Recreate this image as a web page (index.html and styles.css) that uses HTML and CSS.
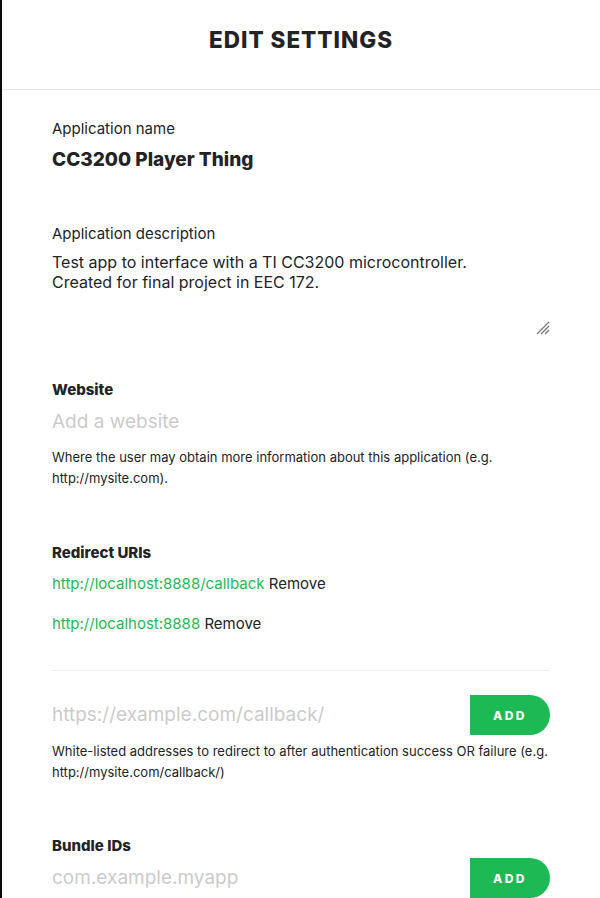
FILE: index.html
```html
<!DOCTYPE html>
<html>
<head>
<meta charset="utf-8">
<link rel="stylesheet" href="styles.css">
</head>
<body>
<div class="page">
  <header class="header"><h1 class="title">EDIT SETTINGS</h1></header>
  <main class="content">
    <section class="field field-name">
      <div class="label">Application name</div>
      <div class="app-name">CC3200 Player Thing</div>
    </section>
    <section class="field field-desc">
      <div class="label">Application description</div>
      <div class="textarea">
        <div class="desc-text">Test app to interface with a TI CC3200 microcontroller.<br>Created for final project in EEC 172.</div>
        <svg class="resize" width="14" height="14" viewBox="0 0 14 14"><g stroke="#777" stroke-width="1.3"><line x1="1" y1="13" x2="13" y2="1"/><line x1="5" y1="13" x2="13" y2="5"/><line x1="9" y1="13" x2="13" y2="9"/></g></svg>
      </div>
    </section>
    <section class="field field-web">
      <div class="label-bold">Website</div>
      <div class="placeholder">Add a website</div>
      <p class="help">Where the user may obtain more information about this application (e.g. http://mysite.com).</p>
    </section>
    <section class="field field-redirect">
      <div class="label-bold">Redirect URIs</div>
      <div class="uri"><span class="link">http://localhost:8888/callback</span> Remove</div>
      <div class="uri"><span class="link">http://localhost:8888</span> Remove</div>
      <div class="divider"></div>
      <div class="add-row">
        <div class="placeholder">https://example.com/callback/</div>
        <button class="add-btn">ADD</button>
      </div>
      <p class="help">White-listed addresses to redirect to after authentication success OR failure (e.g. http://mysite.com/callback/)</p>
    </section>
    <section class="field field-bundle">
      <div class="label-bold">Bundle IDs</div>
      <div class="add-row">
        <div class="placeholder">com.example.myapp</div>
        <button class="add-btn">ADD</button>
      </div>
    </section>
  </main>
</div>
</body>
</html>
```
FILE: styles.css
```css
html, body { margin: 0; padding: 0; background: #fff; }
body { font-family: Inter, "Liberation Sans", sans-serif; color: #222326; overflow: hidden; height: 898px; }
.page { border-left: 2px solid #0a0a0a; min-height: 898px; box-sizing: border-box; }
.header { height: 89px; border-bottom: 1px solid #e6e6e6; display: flex; align-items: center; justify-content: center; }
.title { margin: 0; font-size: 22.5px; font-weight: 800; letter-spacing: 1px; color: #222326; padding-bottom: 10px; }
.content { padding: 0 50px 0 50px; }
.field-name { padding-top: 29px; }
.label { font-size: 15px; line-height: 20px; }
.app-name { font-size: 19px; font-weight: 800; margin-top: 9px; line-height: 24px; }
.field-desc { margin-top: 52px; }
.textarea { position: relative; height: 90px; margin-top: 8px; }
.desc-text { font-size: 16px; line-height: 20px; }
.resize { position: absolute; right: 0; bottom: 7px; }
.field-web { margin-top: 38px; }
.label-bold { font-size: 15px; font-weight: 800; line-height: 20px; }
.placeholder { font-size: 19px; color: #cbcbcb; line-height: 24px; }
.field-web .placeholder { margin-top: 10px; }
.help { font-size: 13px; line-height: 21px; margin: 13px 0 0; }
.field-redirect { margin-top: 54px; }
.uri { font-size: 15px; line-height: 20px; margin-top: 11px; }
.uri + .uri { margin-top: 20px; }
.link { color: #1db954; }
.divider { height: 1px; background: #ececec; margin-top: 36px; }
.add-row { display: flex; align-items: center; justify-content: space-between; margin-top: 24px; }
.add-btn { width: 80px; height: 40px; border: 0; background: #1db954; color: #fff; font-family: inherit; font-size: 12px; font-weight: 800; letter-spacing: 2.5px; border-radius: 0 20px 20px 0; padding: 0; }
.field-redirect .help { margin-top: 6px; }
.field-bundle { margin-top: 53px; }
.field-bundle .add-row { margin-top: 2px; }
```
